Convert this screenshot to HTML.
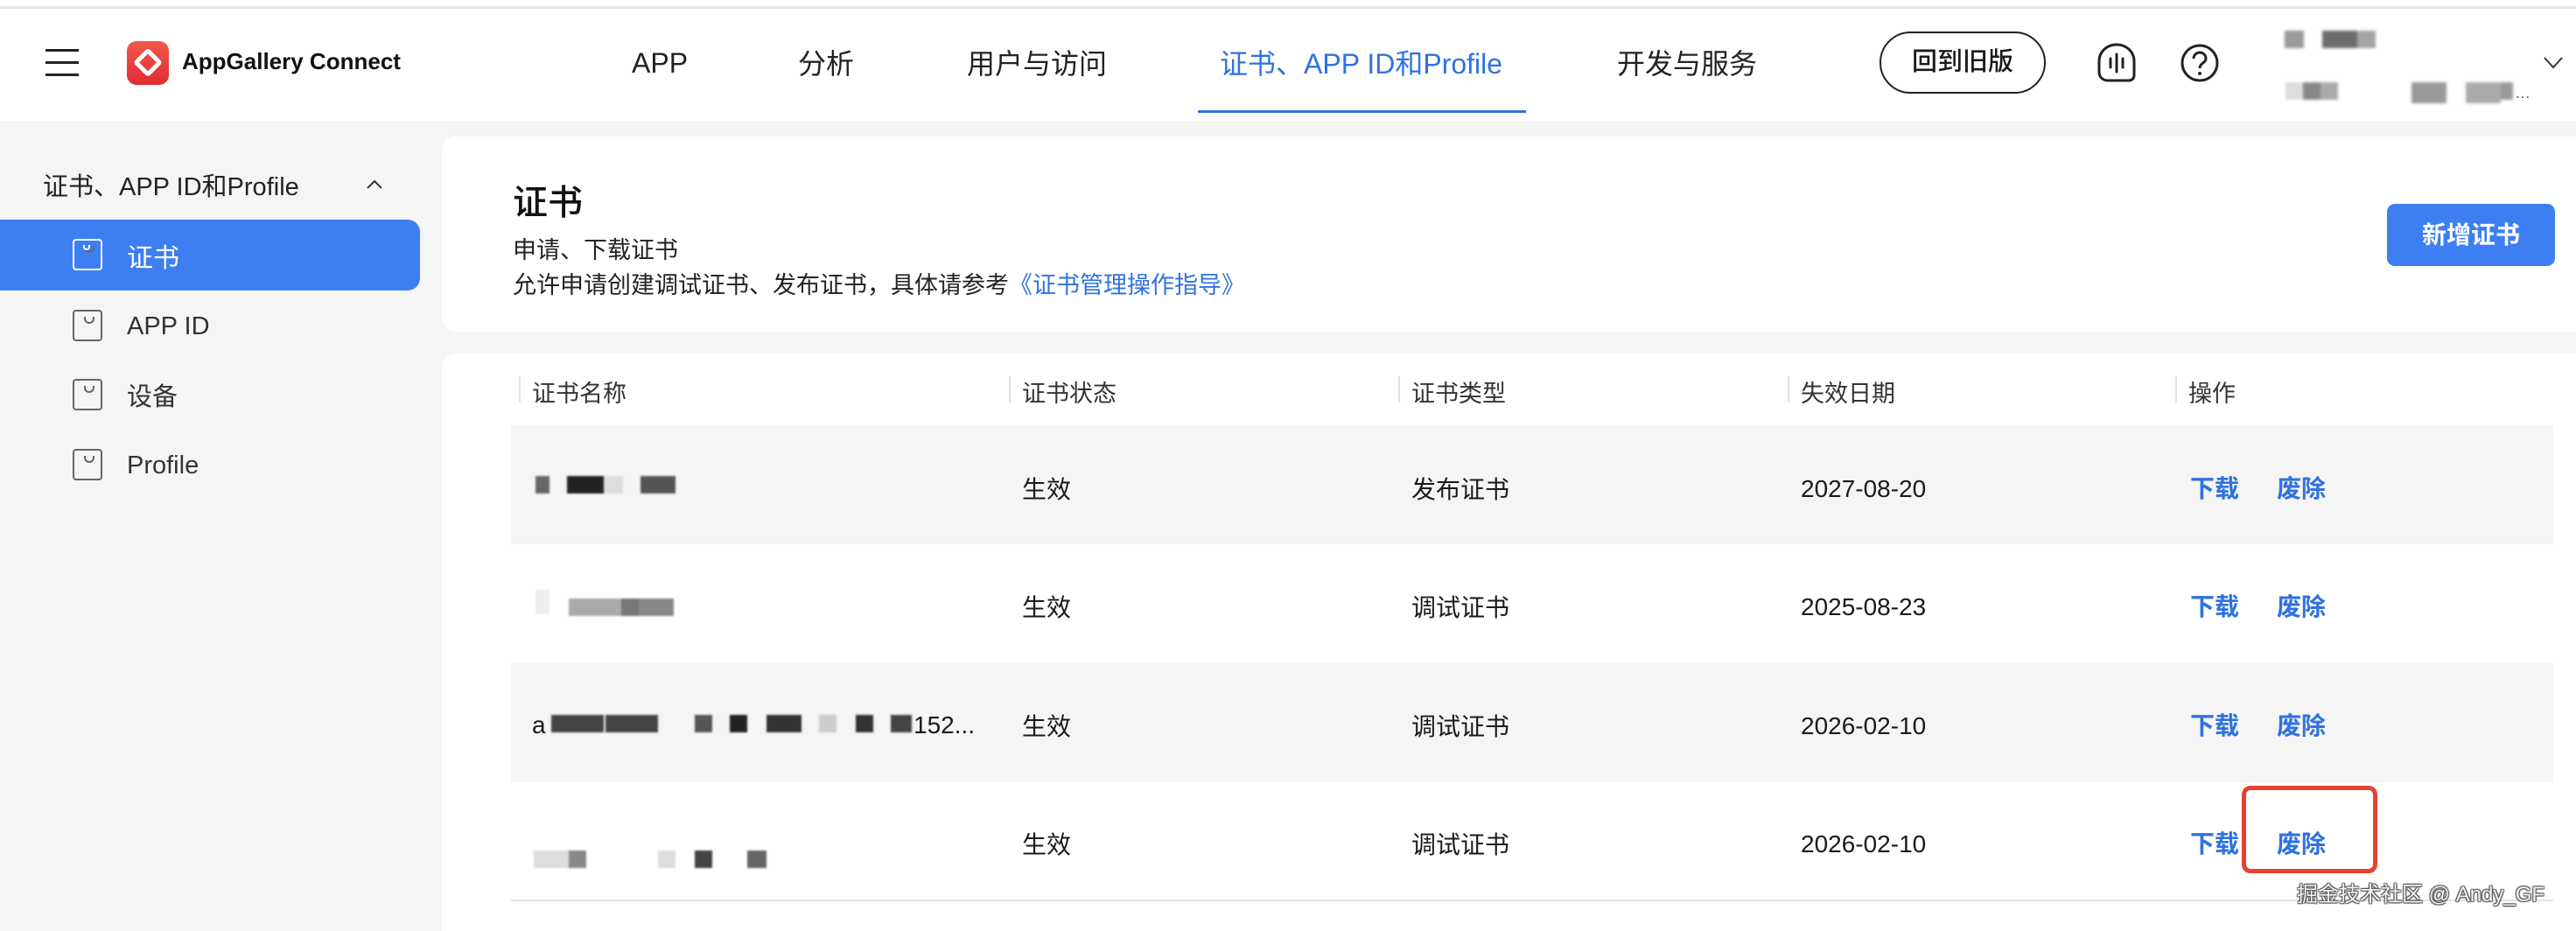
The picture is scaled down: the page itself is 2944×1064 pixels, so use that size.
<!DOCTYPE html>
<html style="width:2944px;height:1064px;overflow:hidden"><head><meta charset="utf-8"><style>
*{margin:0;padding:0;box-sizing:border-box}
body{width:2944px;height:1064px;overflow:hidden;background:#f5f5f5;font-family:"Liberation Sans","Noto Sans CJK SC",sans-serif;color:#1a1a1a;position:relative}
.a{position:absolute}
.hdr{left:0;top:0;width:2944px;height:131px;background:#fff;border-top:3px solid #e6e6e6;margin-top:7px}
.nav{top:48px;font-size:32px;color:#222;white-space:nowrap}
.px{position:absolute;height:20px}
.card{background:#fff;border-radius:16px}
.th{top:428px;font-size:27px;color:#333}
.sep{top:430px;width:2px;height:30px;background:#e3e3e3}
.row{left:584px;width:2334px;height:136px}
.td{font-size:28px;color:#1a1a1a;white-space:nowrap}
.dt{font-size:28px;color:#1a1a1a;white-space:nowrap;margin-top:5px}
.lk{font-size:28px;color:#2f72e0;font-weight:bold}
.ic{position:absolute;width:34px;height:36px;border:2px solid #666;border-radius:4px}
.ic:after{content:"";position:absolute;left:11px;top:6px;width:8px;height:6px;border:2px solid #666;border-top:none;border-radius:0 0 6px 6px}
</style></head><body>
<div class="a" style="left:0;top:0;width:2944px;height:7px;background:#fff"></div>
<div class="a hdr"></div>
<div class="a" style="left:52px;top:56px;width:38px;height:3px;background:#222"></div>
<div class="a" style="left:52px;top:70px;width:38px;height:3px;background:#222"></div>
<div class="a" style="left:52px;top:84px;width:38px;height:3px;background:#222"></div>
<div class="a" style="left:145px;top:47px;width:48px;height:50px;border-radius:11px;background:linear-gradient(180deg,#f05a4a,#e12b34)"></div>
<div class="a" style="left:157px;top:58px;width:24px;height:24px;border:5px solid #fff;border-radius:4px;transform:rotate(45deg) translate(1px,1px)"></div>
<div class="a" style="left:208px;top:55px;font-size:26px;font-weight:bold;color:#111">AppGallery Connect</div>
<div class="a nav" style="left:722px;top:54px">APP</div>
<div class="a nav" style="left:912px">分析</div>
<div class="a nav" style="left:1105px">用户与访问</div>
<div class="a nav" style="left:1394px;color:#2f72e0">证书、APP ID和Profile</div>
<div class="a" style="left:1369px;top:126px;width:375px;height:3px;background:#2f72e0"></div>
<div class="a nav" style="left:1848px">开发与服务</div>
<div class="a" style="left:2148px;top:36px;width:190px;height:71px;border:2.5px solid #222;border-radius:36px;font-size:29px;text-align:center;line-height:66px;font-weight:500">回到旧版</div>
<svg class="a" style="left:2396px;top:48px" width="46" height="48" viewBox="0 0 46 48"><path d="M23 3C12 3 3 11 3 22v12c0 6 4 10 10 10h24c4 0 6-3 6-6V22C43 11 34 3 23 3z" fill="none" stroke="#222" stroke-width="3"/><path d="M23 14v20M16 19v10M30 19v10" stroke="#222" stroke-width="3" stroke-linecap="round"/></svg>
<svg class="a" style="left:2491px;top:48px" width="46" height="48" viewBox="0 0 46 48"><circle cx="23" cy="24" r="20" fill="none" stroke="#222" stroke-width="3"/><path d="M16 19c0-4 3-7 7-7s7 3 7 7c0 5-7 5-7 11" fill="none" stroke="#222" stroke-width="3"/><circle cx="23" cy="36" r="2" fill="#222"/></svg>
<div style="filter:blur(1.5px)">
<div class="px a" style="left:2611px;top:35px;width:22px;background:#9a9a9a"></div>
<div class="px a" style="left:2654px;top:35px;width:40px;background:#6d6d6d"></div>
<div class="px a" style="left:2694px;top:35px;width:21px;background:#a5a5a5"></div>
<div class="px a" style="left:2612px;top:94px;width:20px;background:#ddd"></div>
<div class="px a" style="left:2632px;top:94px;width:20px;background:#888"></div>
<div class="px a" style="left:2652px;top:94px;width:20px;background:#aaa"></div>
<div class="px a" style="left:2756px;top:94px;width:40px;height:24px;background:#999"></div>
<div class="px a" style="left:2818px;top:94px;width:40px;height:24px;background:#aaa"></div>
<div class="px a" style="left:2858px;top:94px;width:14px;background:#999"></div>
</div>
<div class="a" style="left:2874px;top:96px;font-size:18px;color:#666">…</div>
<svg class="a" style="left:2906px;top:64px" width="24" height="16"><path d="M2 2l10 11L22 2" fill="none" stroke="#333" stroke-width="2"/></svg>

<div class="a" style="left:49px;top:190px;font-size:29px;color:#222">证书、APP ID和Profile</div>
<svg class="a" style="left:418px;top:204px" width="20" height="14"><path d="M2 11l8-8 8 8" fill="none" stroke="#333" stroke-width="2"/></svg>
<div class="a" style="left:0;top:251px;width:480px;height:81px;background:#3d7ff3;border-radius:0 14px 14px 0"></div>
<div class="ic" style="left:83px;top:273px;border-color:#fff"></div>
<div class="a" style="left:95px;top:280px;width:8px;height:6px;border:2px solid #fff;border-top:none;border-radius:0 0 6px 6px"></div>
<div class="a" style="left:145px;top:270px;font-size:30px;color:#fff">证书</div>
<div class="ic" style="left:83px;top:354px"></div>
<div class="a" style="left:145px;top:357px;font-size:29px;color:#333">APP ID</div>
<div class="ic" style="left:83px;top:433px"></div>
<div class="a" style="left:145px;top:430px;font-size:29px;color:#333">设备</div>
<div class="ic" style="left:83px;top:513px"></div>
<div class="a" style="left:145px;top:516px;font-size:29px;color:#333">Profile</div>

<div class="a card" style="left:505px;top:156px;width:2460px;height:223px"></div>
<div class="a" style="left:586px;top:199px;font-size:40px;font-weight:500;color:#111">证书</div>
<div class="a" style="left:586px;top:264px;font-size:27px;color:#222">申请、下载证书</div>
<div class="a" style="left:586px;top:304px;font-size:27px;color:#222">允许申请创建调试证书、发布证书，具体请参考<span style="color:#2f72e0">《证书管理操作指导》</span></div>
<div class="a" style="left:2728px;top:233px;width:192px;height:71px;background:#3d7ff3;border-radius:9px;color:#fff;font-size:28px;font-weight:bold;text-align:center;line-height:71px">新增证书</div>

<div class="a card" style="left:505px;top:404px;width:2460px;height:660px;border-radius:16px 16px 0 0"></div>
<div class="a sep" style="left:593px"></div><div class="a th" style="left:608px">证书名称</div>
<div class="a sep" style="left:1153px"></div><div class="a th" style="left:1168px">证书状态</div>
<div class="a sep" style="left:1598px"></div><div class="a th" style="left:1613px">证书类型</div>
<div class="a sep" style="left:2043px"></div><div class="a th" style="left:2058px">失效日期</div>
<div class="a sep" style="left:2486px"></div><div class="a th" style="left:2501px">操作</div>

<div class="a row" style="top:486px;background:#f5f5f5"></div>
<div class="a row" style="top:758px;background:#f5f5f5"></div>
<div class="a" style="left:584px;top:1028px;width:2334px;height:2px;background:#e3e3e3"></div>

<div style="filter:blur(1px)">
<div class="px a" style="left:612px;top:544px;width:16px;background:#666"></div>
<div class="px a" style="left:648px;top:544px;width:42px;background:#222"></div>
<div class="px a" style="left:690px;top:544px;width:22px;background:#ddd"></div>
<div class="px a" style="left:732px;top:544px;width:40px;background:#555"></div>
<div class="px a" style="left:612px;top:674px;width:16px;height:28px;background:#eee"></div>
<div class="px a" style="left:650px;top:684px;width:60px;background:#aaa"></div>
<div class="px a" style="left:710px;top:684px;width:20px;background:#777"></div>
<div class="px a" style="left:730px;top:684px;width:40px;background:#888"></div>
<div class="px a" style="left:630px;top:817px;width:60px;background:#444"></div>
<div class="px a" style="left:692px;top:817px;width:60px;background:#444"></div>
<div class="px a" style="left:794px;top:817px;width:20px;background:#555"></div>
<div class="px a" style="left:834px;top:817px;width:20px;background:#222"></div>
<div class="px a" style="left:876px;top:817px;width:40px;background:#333"></div>
<div class="px a" style="left:936px;top:817px;width:20px;background:#ccc"></div>
<div class="px a" style="left:978px;top:817px;width:20px;background:#333"></div>
<div class="px a" style="left:1018px;top:817px;width:24px;background:#444"></div>
<div class="px a" style="left:610px;top:972px;width:40px;background:#ddd"></div>
<div class="px a" style="left:650px;top:972px;width:20px;background:#888"></div>
<div class="px a" style="left:752px;top:972px;width:20px;background:#ddd"></div>
<div class="px a" style="left:794px;top:972px;width:20px;background:#444"></div>
<div class="px a" style="left:854px;top:972px;width:22px;background:#666"></div>
</div>
<div class="a dt" style="left:608px;top:808px">a</div>
<div class="a dt" style="left:1044px;top:808px">152...</div>

<div class="a td" style="left:1168px;top:538px">生效</div>
<div class="a td" style="left:1613px;top:538px">发布证书</div>
<div class="a dt" style="left:2058px;top:538px">2027-08-20</div>
<div class="a lk" style="left:2503px;top:537px">下载</div><div class="a lk" style="left:2602px;top:537px">废除</div>

<div class="a td" style="left:1168px;top:673px">生效</div>
<div class="a td" style="left:1613px;top:673px">调试证书</div>
<div class="a dt" style="left:2058px;top:673px">2025-08-23</div>
<div class="a lk" style="left:2503px;top:672px">下载</div><div class="a lk" style="left:2602px;top:672px">废除</div>

<div class="a td" style="left:1168px;top:809px">生效</div>
<div class="a td" style="left:1613px;top:809px">调试证书</div>
<div class="a dt" style="left:2058px;top:809px">2026-02-10</div>
<div class="a lk" style="left:2503px;top:808px">下载</div><div class="a lk" style="left:2602px;top:808px">废除</div>

<div class="a td" style="left:1168px;top:944px">生效</div>
<div class="a td" style="left:1613px;top:944px">调试证书</div>
<div class="a dt" style="left:2058px;top:944px">2026-02-10</div>
<div class="a lk" style="left:2503px;top:943px">下载</div><div class="a lk" style="left:2602px;top:943px">废除</div>

<div class="a" style="left:2562px;top:898px;width:155px;height:100px;border:5px solid #e5432d;border-radius:10px"></div>
<div class="a" style="left:2625px;top:1002px;font-size:24px;color:#f2f2f2;white-space:nowrap;text-shadow:1px 1px 1px #555,-1px -1px 1px #555,1px -1px 1px #555,-1px 1px 1px #555">掘金技术社区 @ Andy_GF</div>
</body></html>
